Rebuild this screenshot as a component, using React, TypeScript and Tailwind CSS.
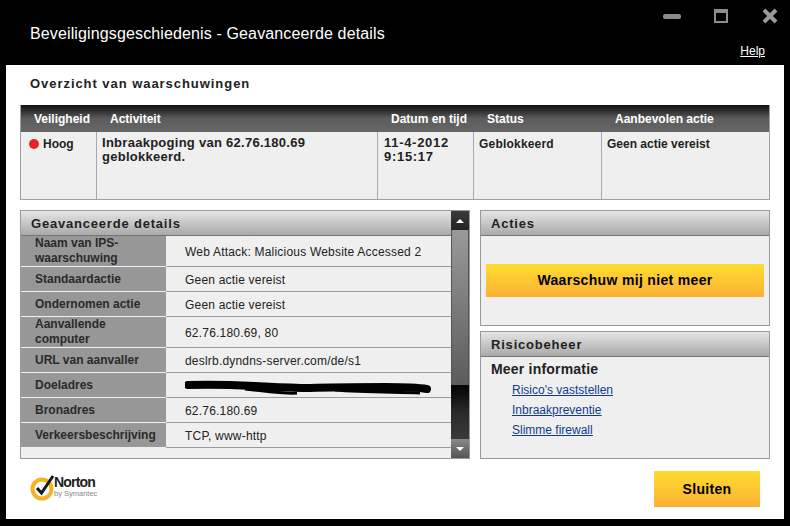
const sans = "font-['Liberation_Sans',Arial,sans-serif]";

const details = [
  { label: "Naam van IPS-\nwaarschuwing", value: "Web Attack: Malicious Website Accessed 2", h: "h-[31px]" },
  { label: "Standaardactie", value: "Geen actie vereist", h: "h-[25px]" },
  { label: "Ondernomen actie", value: "Geen actie vereist", h: "h-[25px]" },
  { label: "Aanvallende\ncomputer", value: "62.76.180.69, 80", h: "h-[31px]" },
  { label: "URL van aanvaller", value: "deslrb.dyndns-server.com/de/s1", h: "h-[25px]" },
  { label: "Doeladres", value: "", h: "h-[25px]" },
  { label: "Bronadres", value: "62.76.180.69", h: "h-[25px]" },
  { label: "Verkeersbeschrijving", value: "TCP, www-http", h: "h-[25px]" },
];

function PanelHeader({ title }: { title: string }) {
  return (
    <div className="flex h-[25px] shrink-0 items-center border-b border-[#777777] bg-gradient-to-b from-[#e6e6e6] to-[#a9a9a9] pt-[2px] pl-[10px] text-[13px] font-bold tracking-[0.8px] text-[#222222]">
      {title}
    </div>
  );
}

function WindowControls() {
  return (
    <div className="flex h-[30px] items-center">
      <div className="mr-[33px] h-[5px] w-[18px] rounded-[2px] bg-[#8c8c8c]" />
      <div className="mr-[34px] h-[14px] w-[14px] border-[2px] border-t-[4px] border-[#8c8c8c]" />
      <svg width="16" height="16" viewBox="0 0 16 16">
        <path d="M2 2 L14 14 M14 2 L2 14" stroke="#9a9a9a" strokeWidth="4" />
      </svg>
    </div>
  );
}

function Scribble() {
  return (
    <svg width="246" height="16" viewBox="0 0 246 16" className="mt-[2px] block">
      <path
        d="M3 6 C30 5 50 6 70 7 C90 8 105 9 125 9 C150 8 170 8 200 8 C215 8 230 8 242 10"
        fill="none"
        stroke="#000000"
        strokeWidth="8"
        strokeLinecap="round"
      />
      <path d="M60 10 C80 12 100 15 112 14 M150 11 C175 13 200 13 235 14" fill="none" stroke="#000000" strokeWidth="3" />
    </svg>
  );
}

function Scrollbar() {
  return (
    <div className="flex w-[18px] shrink-0 flex-col bg-[#2c2c2c]">
      <div className="flex h-[19px] items-center justify-center bg-gradient-to-b from-[#3c3c3c] to-[#222222]">
        <div className="h-0 w-0 border-x-[4px] border-b-[4px] border-x-transparent border-b-white" />
      </div>
      <div className="h-[155px] border-x border-[#555555] bg-gradient-to-b from-[#9a9a9a] to-[#5c5c5c]" />
      <div className="flex-1 bg-gradient-to-b from-[#050505] via-[#2a2a2a] to-[#3a3a3a]" />
      <div className="flex h-[19px] items-center justify-center bg-gradient-to-b from-[#8a8a8a] to-[#555555]">
        <div className="h-0 w-0 border-x-[4px] border-t-[4px] border-x-transparent border-t-white" />
      </div>
    </div>
  );
}

function NortonLogo() {
  return (
    <div className="flex items-center">
      <svg width="26" height="28" viewBox="0 0 26 28" className="shrink-0">
        <circle cx="12" cy="16" r="9.5" fill="none" stroke="#f5b324" strokeWidth="4" />
        <path d="M7 15 L11.5 20 L23 3" fill="none" stroke="#1a1a1a" strokeWidth="3" />
      </svg>
      <div className="-ml-[2px] flex flex-col">
        <span className="text-[14px] leading-[13px] font-bold tracking-[-0.8px] text-[#222222]">Norton</span>
        <span className="text-[7.5px] leading-[9px] text-[#888888]">by Symantec</span>
      </div>
    </div>
  );
}

export default function App() {
  return (
    <div className={`flex h-[526px] w-[790px] flex-col overflow-hidden bg-black ${sans}`}>
      <div className="flex h-[65px] shrink-0 justify-between pt-[1px] pr-[12px] pl-[30px] text-white">
        <div className="pt-[23px] text-[16px] leading-[20px] font-light tracking-[0.13px]">
          Beveiligingsgeschiedenis - Geavanceerde details
        </div>
        <div className="flex flex-col items-end">
          <WindowControls />
          <a className="mt-[13px] mr-[13px] text-[12px] leading-[14px] underline">Help</a>
        </div>
      </div>

      <div className="mx-[6px] flex h-[454px] flex-col bg-white px-[14px]">
        <h1 className="flex h-[40px] shrink-0 items-center pb-[3px] pl-[10px] text-[13px] font-bold tracking-[0.95px] text-[#222222]">
          Overzicht van waarschuwingen
        </h1>

        <div className="h-[95px] shrink-0 border border-t-0 border-[#a0a0a0] bg-[#efefef]">
          <div className="grid h-[27px] grid-cols-[76px_281px_96px_128px_1fr] items-center bg-gradient-to-b from-[#111111] via-[#5c5c5c] to-[#666666] text-[12px] font-bold text-white">
            <div className="pl-[13px]">Veiligheid</div>
            <div className="pl-[13px]">Activiteit</div>
            <div className="pl-[13px]">Datum en tijd</div>
            <div className="pl-[13px]">Status</div>
            <div className="pl-[13px]">Aanbevolen actie</div>
          </div>
          <div className="grid h-[67px] grid-cols-[76px_281px_96px_128px_1fr] text-[#222222]">
            <div className="flex items-start border-r border-[#a8a8b4] pt-[5px] pl-[8px] text-[12px] leading-[14px] font-bold">
              <span className="mt-[2px] mr-[4px] h-[10px] w-[10px] rounded-full bg-[#e8262a]" />
              Hoog
            </div>
            <div className="border-r border-[#a8a8b4] pt-[4px] pl-[5px] text-[13px] leading-[14px] font-bold tracking-[0.27px]">
              Inbraakpoging van 62.76.180.69
              <br />
              geblokkeerd.
            </div>
            <div className="border-r border-[#a8a8b4] pt-[4px] pl-[6px] text-[13px] leading-[14px] font-bold tracking-[0.7px]">
              11-4-2012
              <br />
              9:15:17
            </div>
            <div className="border-r border-[#a8a8b4] pt-[5px] pl-[5px] text-[12px] leading-[14px] font-bold tracking-[0.2px]">
              Geblokkeerd
            </div>
            <div className="pt-[5px] pl-[5px] text-[12px] leading-[14px] font-bold">Geen actie vereist</div>
          </div>
        </div>

        <div className="mt-[10px] flex gap-[10px]">
          <div className="flex h-[249px] w-[450px] border border-[#999999] bg-[#efefef]">
            <div className="flex min-w-0 flex-1 flex-col">
              <PanelHeader title="Geavanceerde details" />
              {details.map((row) => (
                <div key={row.label} className={`flex ${row.h} shrink-0`}>
                  <div className="flex w-[145px] shrink-0 items-center whitespace-pre-line border-b border-[#efefef] bg-[#979797] pl-[14px] text-[12px] leading-[15px] font-bold text-[#2a2a2a]">
                    {row.label}
                  </div>
                  <div className="flex flex-1 items-center border-b border-[#999999] pt-[2px] pl-[19px] text-[12px] tracking-[0.2px] text-[#222222]">
                    {row.value || <Scribble />}
                  </div>
                </div>
              ))}
            </div>
            <Scrollbar />
          </div>

          <div className="flex w-[290px] flex-col gap-[5px]">
            <div className="flex h-[116px] flex-col border border-[#999999] bg-[#efefef]">
              <PanelHeader title="Acties" />
              <div className="flex flex-1 items-center justify-center px-[5px]">
                <button className="h-[33px] w-full bg-gradient-to-b from-[#fddc2f] to-[#fbb034] text-[14px] font-bold tracking-[0.33px] text-black">
                  Waarschuw mij niet meer
                </button>
              </div>
            </div>
            <div className="flex h-[128px] flex-col border border-[#999999] bg-[#efefef]">
              <PanelHeader title="Risicobeheer" />
              <div className="pt-[3px] pl-[10px]">
                <div className="text-[14px] leading-[18px] font-bold tracking-[0.2px] text-[#222222]">Meer informatie</div>
                <div className="flex flex-col gap-[6px] pt-[5px] pl-[21px] text-[12px] leading-[14px] text-[#0f3c8f] underline">
                  <a>Risico's vaststellen</a>
                  <a>Inbraakpreventie</a>
                  <a>Slimme firewall</a>
                </div>
              </div>
            </div>
          </div>
        </div>

        <div className="flex flex-1 items-start justify-between pt-[12px] pr-[10px] pl-[10px]">
          <div className="pt-[2px]">
            <NortonLogo />
          </div>
          <button className="h-[36px] w-[106px] bg-gradient-to-b from-[#fddc2f] to-[#fbb034] text-[14px] font-bold tracking-[0.3px] text-black">
            Sluiten
          </button>
        </div>
      </div>
    </div>
  );
}
